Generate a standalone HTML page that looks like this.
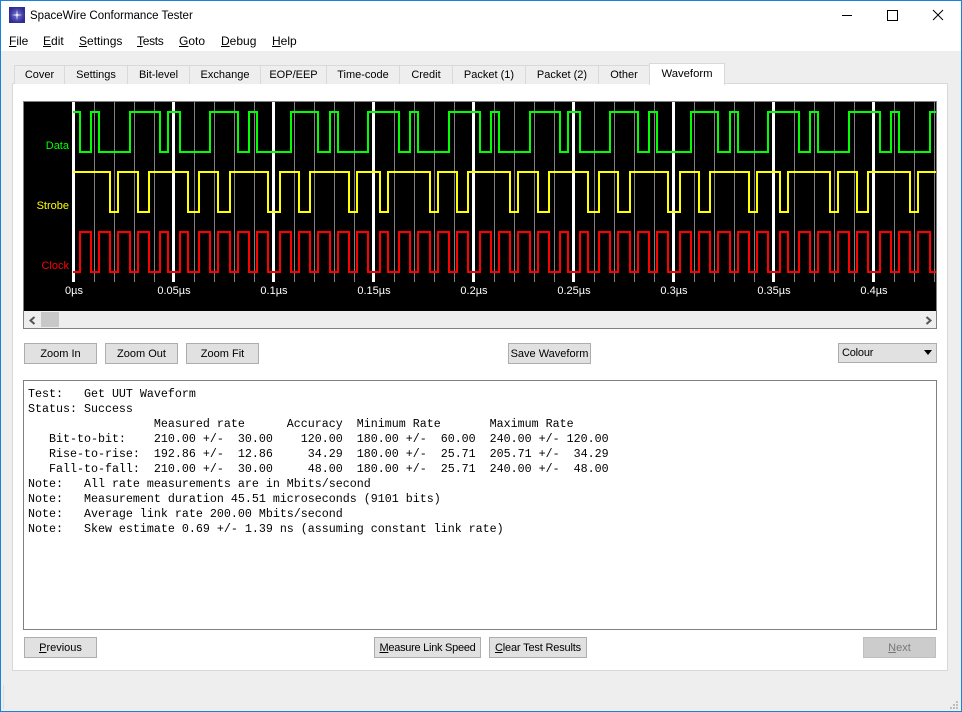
<!DOCTYPE html>
<html><head><meta charset="utf-8"><style>
html,body{margin:0;padding:0}
body{width:962px;height:712px;overflow:hidden;position:relative;background:#eee;font:12px "Liberation Sans",sans-serif;color:#000}
div,span.a{position:absolute;box-sizing:border-box}
.win{left:0;top:0;width:962px;height:712px;border:1px solid #1883d7;border-top-width:1px}
.t{white-space:nowrap;line-height:16px}
.m{top:33px}
u{text-decoration:underline}
.tab{top:65px;height:19px;background:#eee;border:1px solid #d9d9d9;border-bottom:none;margin-right:0;text-align:center;line-height:19px;white-space:nowrap;font-size:11px}
.btn{background:#e1e1e1;border:1px solid #adadad;text-align:center;white-space:nowrap;line-height:21px;font-size:11px}
pre{position:absolute;margin:0;left:28px;top:387px;font:11.67px/15px "Liberation Mono",monospace;color:#000}
</style></head><body>
<div style="left:0;top:0;width:962px;height:51px;background:#fff"></div>
<div class="win"></div>
<svg style="position:absolute;left:9px;top:7px" width="16" height="16" viewBox="0 0 16 16"><defs><radialGradient id="g"><stop offset="0" stop-color="#7a78d0"/><stop offset="1" stop-color="#2f2c96"/></radialGradient></defs><rect width="16" height="16" fill="url(#g)"/><path d="M8 2.5L8.6 7.4 13.5 8 8.6 8.6 8 13.5 7.4 8.6 2.5 8 7.4 7.4Z" fill="#fff"/></svg>
<div class="t" style="left:30px;top:8px;font-size:11.5px">SpaceWire Conformance Tester</div>
<svg style="position:absolute;left:830px;top:0" width="132" height="30"><path d="M12 15.5H22M57.5 10.5H67.5V20.5H57.5ZM103 10L113 20M113 10L103 20" fill="none" stroke="#000" stroke-width="1"/></svg>
<div class="t m" style="left:9px"><u>F</u>ile</div>
<div class="t m" style="left:43px"><u>E</u>dit</div>
<div class="t m" style="left:79px"><u>S</u>ettings</div>
<div class="t m" style="left:137px;letter-spacing:-.3px"><u>T</u>ests</div>
<div class="t m" style="left:179px"><u>G</u>oto</div>
<div class="t m" style="left:221px"><u>D</u>ebug</div>
<div class="t m" style="left:272px"><u>H</u>elp</div>

<div style="left:12px;top:83px;width:936px;height:588px;background:#fff;border:1px solid #d9d9d9"></div>
<div class="tab" style="left:14px;width:51px">Cover</div>
<div class="tab" style="left:64px;width:64px">Settings</div>
<div class="tab" style="left:127px;width:63px">Bit-level</div>
<div class="tab" style="left:189px;width:72px">Exchange</div>
<div class="tab" style="left:260px;width:67px">EOP/EEP</div>
<div class="tab" style="left:326px;width:74px">Time-code</div>
<div class="tab" style="left:399px;width:54px">Credit</div>
<div class="tab" style="left:452px;width:74px">Packet (1)</div>
<div class="tab" style="left:525px;width:74px">Packet (2)</div>
<div class="tab" style="left:598px;width:52px">Other</div>
<div class="tab" style="left:649px;top:63px;width:76px;height:22px;background:#fff;line-height:21px;font-size:11.3px">Waveform</div>

<div style="left:23px;top:101px;width:914px;height:228px;border:1px solid #808080;background:#eee"></div>
<svg style="position:absolute;left:24px;top:102px" width="912" height="209" viewBox="24 102 912 209">
<rect x="24" y="102" width="912" height="209" fill="#000"/>
<line x1="94" x2="936" y1="192" y2="192" stroke="#808080" stroke-width="180" stroke-dasharray="1 19"/>
<line x1="72" x2="936" y1="192" y2="192" stroke="#fff" stroke-width="180" stroke-dasharray="3 97"/>
<g fill="none" stroke-width="2" shape-rendering="crispEdges">
<path stroke="#0f0" d="M73 112H80V152H91V112H99V152H130V112H160V152H168V112H180V152H210V112H238V152H249V112H257V152H291V112H318V152H330V112H338V152H368V112H399V152H410V112H418V152H449V112H480V152H491V112H499V152H530V112H560V152H568V112H580V152H610V112H638V152H649V112H657V152H691V112H718V152H730V112H738V152H768V112H799V152H810V112H818V152H849V112H880V152H891V112H899V152H930V112H936"/>
<path stroke="#ff0" d="M73 172H110V212H118V172H138V212H149V172H188V212H199V172H218V212H230V172H268V212H280V172H299V212H310V172H349V212H357V172H380V212H388V172H430V212H438V172H457V212H468V172H510V212H518V172H538V212H549V172H588V212H599V172H618V212H630V172H668V212H680V172H699V212H710V172H749V212H757V172H780V212H788V172H830V212H838V172H857V212H868V172H910V212H918V172H936"/>
<path stroke="#f00" d="M73 272H80V232H91V272H99V232H110V272H118V232H130V272H138V232H149V272H160V232H168V272H180V232H188V272H199V232H210V272H218V232H230V272H238V232H249V272H257V232H268V272H280V232H291V272H299V232H310V272H318V232H330V272H338V232H349V272H357V232H368V272H380V232H388V272H399V232H410V272H418V232H430V272H438V232H449V272H457V232H468V272H480V232H491V272H499V232H510V272H518V232H530V272H538V232H549V272H560V232H568V272H580V232H588V272H599V232H610V272H618V232H630V272H638V232H649V272H657V232H668V272H680V232H691V272H699V232H710V272H718V232H730V272H738V232H749V272H757V232H768V272H780V232H788V272H799V232H810V272H818V232H830V272H838V232H849V272H857V232H868V272H880V232H891V272H899V232H910V272H918V232H930V272H936"/>
</g>
<g font-family="Liberation Sans,sans-serif" font-size="11" text-anchor="end">
<text x="69" y="149" fill="#0f0">Data</text>
<text x="69" y="209" fill="#ff0">Strobe</text>
<text x="69" y="269" fill="#f00">Clock</text>
</g>
<g font-family="Liberation Sans,sans-serif" font-size="11" text-anchor="middle" fill="#fff">
<text x="74" y="294">0µs</text>
<text x="174" y="294">0.05µs</text>
<text x="274" y="294">0.1µs</text>
<text x="374" y="294">0.15µs</text>
<text x="474" y="294">0.2µs</text>
<text x="574" y="294">0.25µs</text>
<text x="674" y="294">0.3µs</text>
<text x="774" y="294">0.35µs</text>
<text x="874" y="294">0.4µs</text>
</g>
</svg>
<div style="left:41px;top:312px;width:18px;height:15px;background:#c8c8c8"></div>
<svg style="position:absolute;left:24px;top:311px" width="912" height="17"><path d="M10.500 6L6.500 9.500 10.500 13M902.500 6L906.500 9.500 902.500 13" fill="none" stroke="#555" stroke-width="2"/></svg>

<div class="btn" style="left:24px;top:343px;width:73px;height:21px">Zoom In</div>
<div class="btn" style="left:105px;top:343px;width:73px;height:21px">Zoom Out</div>
<div class="btn" style="left:186px;top:343px;width:73px;height:21px">Zoom Fit</div>
<div class="btn" style="left:508px;top:343px;width:83px;height:21px">Save Waveform</div>
<div class="btn" style="left:838px;top:343px;width:99px;height:20px;text-align:left;padding-left:3px;line-height:19px;letter-spacing:-.2px">Colour</div>
<svg style="position:absolute;left:923px;top:350px" width="10" height="6"><path d="M1 0H9L5 5Z" fill="#000"/></svg>

<div style="left:23px;top:380px;width:914px;height:250px;border:1px solid #808080;background:#fff"></div>
<pre>Test:   Get UUT Waveform
Status: Success
                  Measured rate      Accuracy  Minimum Rate       Maximum Rate
   Bit-to-bit:    210.00 +/-  30.00    120.00  180.00 +/-  60.00  240.00 +/- 120.00
   Rise-to-rise:  192.86 +/-  12.86     34.29  180.00 +/-  25.71  205.71 +/-  34.29
   Fall-to-fall:  210.00 +/-  30.00     48.00  180.00 +/-  25.71  240.00 +/-  48.00
Note:   All rate measurements are in Mbits/second
Note:   Measurement duration 45.51 microseconds (9101 bits)
Note:   Average link rate 200.00 Mbits/second
Note:   Skew estimate 0.69 +/- 1.39 ns (assuming constant link rate)</pre>

<div class="btn" style="left:24px;top:637px;width:73px;height:21px"><u>P</u>revious</div>
<div class="btn" style="left:374px;top:637px;width:107px;height:21px;letter-spacing:-.27px"><u>M</u>easure Link Speed</div>
<div class="btn" style="left:489px;top:637px;width:98px;height:21px;letter-spacing:-.17px"><u>C</u>lear Test Results</div>
<div class="btn" style="left:863px;top:637px;width:73px;height:21px;background:#ccc;border-color:#bfbfbf;color:#787878"><u>N</u>ext</div>

<div style="left:3px;top:685px;width:1px;height:24px;background:#ddd"></div>
<svg style="position:absolute;left:950px;top:701px" width="9" height="9"><path d="M6 0h2v2H6zM3 3h2v2H3zM6 3h2v2H6zM0 6h2v2H0zM3 6h2v2H3zM6 6h2v2H6z" fill="#bdbdbd"/></svg>
</body></html>
